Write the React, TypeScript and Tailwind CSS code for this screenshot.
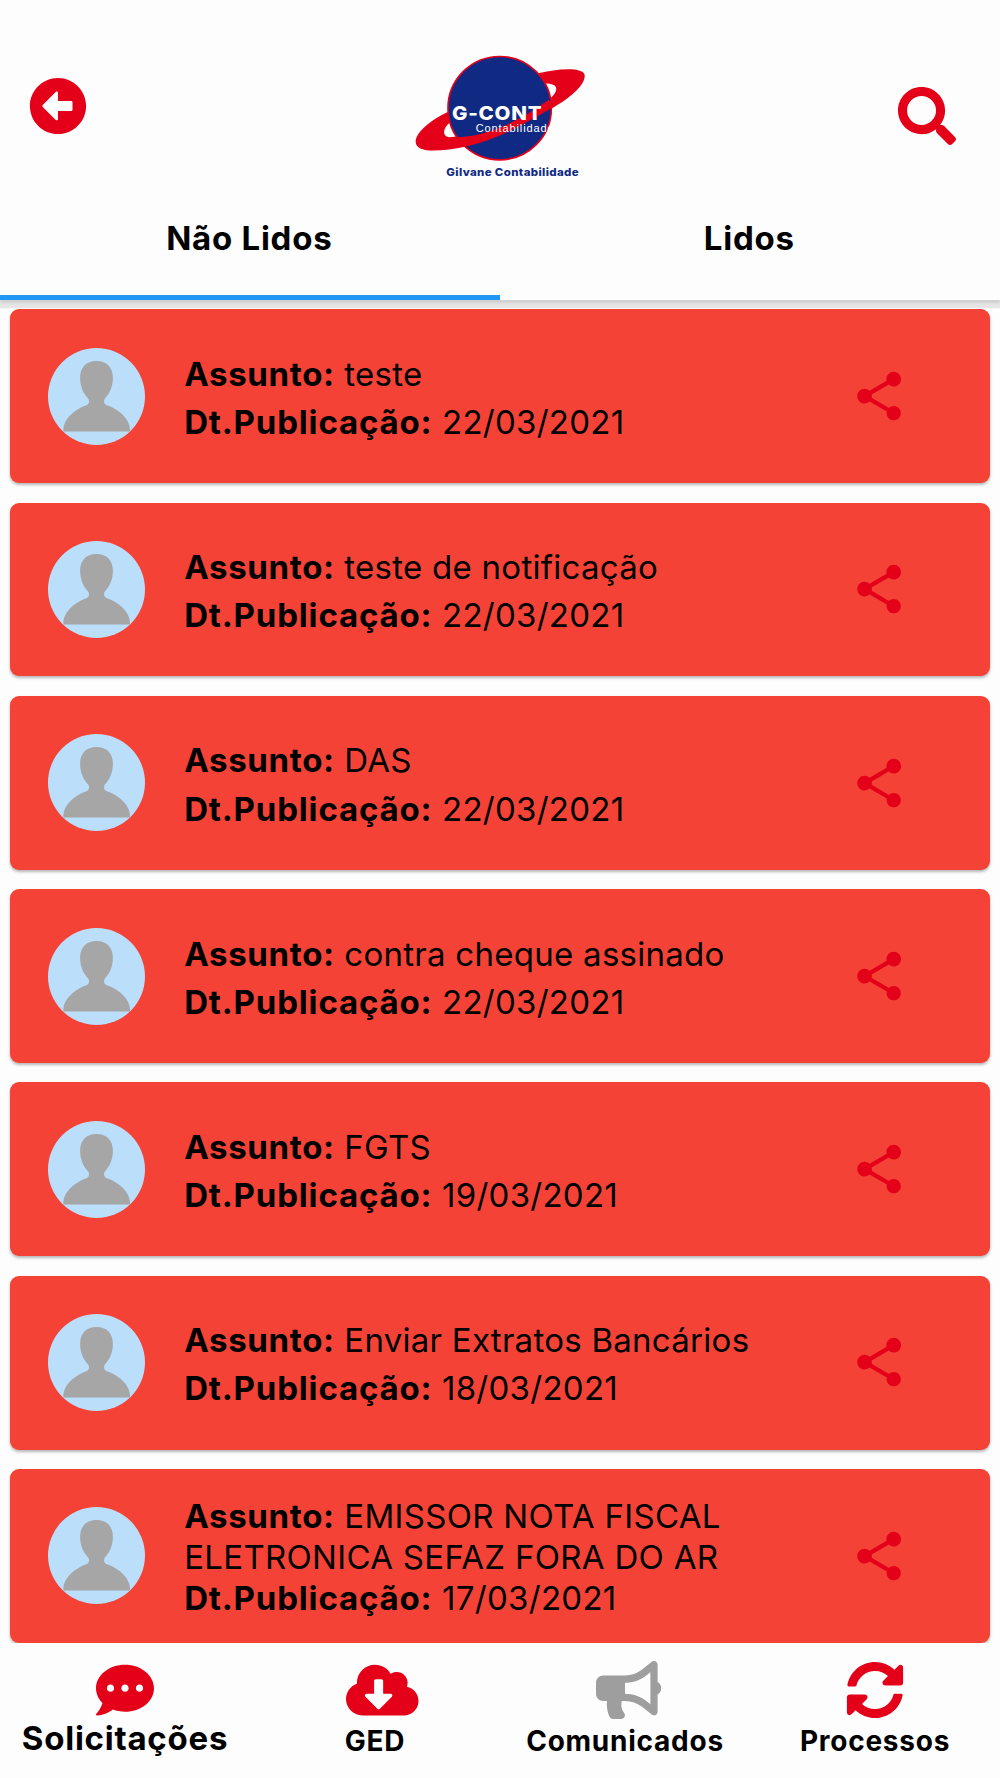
import { FaArrowAltCircleLeft, FaBullhorn, FaCloudDownloadAlt, FaCommentDots, FaSearch, FaSyncAlt } from "react-icons/fa";
import { MdShare } from "react-icons/md";

const notices = [
  { subject: "teste", date: "22/03/2021" },
  { subject: "teste de notificação", date: "22/03/2021" },
  { subject: "DAS", date: "22/03/2021" },
  { subject: "contra cheque assinado", date: "22/03/2021" },
  { subject: "FGTS", date: "19/03/2021" },
  { subject: "Enviar Extratos Bancários", date: "18/03/2021" },
  { subject: "EMISSOR NOTA FISCAL ELETRONICA SEFAZ FORA DO AR", date: "17/03/2021", long: true },
];

function Logo() {
  return (
    <svg viewBox="0 0 600 450" className="h-[150px] w-[200px]" role="img" aria-label="Gilvane Contabilidade">
      <path
        fill="#e50019"
        fillRule="evenodd"
        d="M415 100C470 86 552 80 554 106C556 137 505 177 455 205C370 254 280 304 195 320C130 333 49 343 47 306C46 276 95 238 145 215ZM150 247C128 266 124 291 152 292L300 272L445 180C475 157 483 128 430 131Z"
      />
      <circle cx="299" cy="204.500" r="155" fill="#102a83" stroke="#e50019" strokeWidth="5" />
      <path fill="#e50019" d="M150 291C245 296 350 250 446 179L460 202C370 254 280 304 195 320L165 316Z" />
      <text x="156" y="240" textLength="271" lengthAdjust="spacingAndGlyphs" fill="#fff" fontFamily="Inter, sans-serif" fontWeight="800" fontSize="57" letterSpacing="2">G-CONT</text>
      <text x="227" y="275" textLength="234" fill="#fff" fontFamily="Liberation Sans, sans-serif" fontSize="33">Contabilidade</text>
      <text x="139" y="407" textLength="398" lengthAdjust="spacingAndGlyphs" fill="#102a83" fontFamily="Inter, sans-serif" fontWeight="800" fontSize="32" letterSpacing="1">Gilvane Contabilidade</text>
    </svg>
  );
}

function Avatar() {
  return (
    <svg viewBox="0 0 290 290" className="mt-[38.500px] ml-[38.500px] h-[97px] w-[97px] shrink-0">
      <circle cx="145" cy="145" r="145" fill="#bbdefb" />
      <path
        fill="#a6a6a6"
        d="M145 39C176 39 194 58 194 89C194 119 182 138 170 151C166 156 168 162 169 166C172 170 176 171 181 173C218 188 243 214 245 242V250H46V242C48 214 74 188 110 173C115 171 119 170 121 166C123 162 124 156 120 151C108 138 96 119 96 89C96 58 114 39 145 39Z"
      />
    </svg>
  );
}

function Notice({ subject, date, long }: { subject: string; date: string; long?: boolean }) {
  return (
    <article className="mx-[9.700px] mb-[19.380px] flex h-[173.900px] shrink-0 rounded-[9px] bg-[#f44336] shadow-[0_2px_3px_rgba(0,0,0,0.28)]">
      <Avatar />
      <div
        className={
          long
            ? "mt-[27.500px] ml-[39px] w-[620px] text-[33px] leading-[41px] tracking-[0.300px]"
            : "mt-[40.500px] ml-[39px] w-[620px] text-[33px] leading-[48.300px] tracking-[0.270px]"
        }
      >
        <p>
          <b className="font-bold tracking-[0.650px]">Assunto:</b> {subject}
        </p>
        <p>
          <b className="font-bold tracking-[0.830px]">Dt.Publicação:</b> {date}
        </p>
      </div>
      <MdShare className="mt-[57.800px] ml-[46px] size-[58.300px] shrink-0 text-[#e50019]" />
    </article>
  );
}

export default function App() {
  return (
    <div className="flex h-[1778px] w-[1000px] flex-col overflow-hidden bg-[#fdfdfd] font-['Inter',sans-serif] text-black">
      <header className="relative z-10 h-[300px] shrink-0 bg-[#fdfdfd] shadow-[0_3px_2px_#d0d0d0,0_8px_1px_#e5e5e5]">
        <div className="flex h-[190px] items-start justify-between pr-[44px] pl-[29px]">
          <FaArrowAltCircleLeft className="mt-[77.300px] size-[58px] text-[#e50019]" />
          <div className="mt-10 ml-[15px]">
            <Logo />
          </div>
          <FaSearch className="mt-[87px] size-[58px] text-[#e50019]" />
        </div>
        <nav className="grid h-[110px] grid-cols-2 text-center text-[33px] leading-[40px] font-bold tracking-[0.750px]">
          <div className="border-b-5 border-[#2196f3] pt-[28px] pr-[1.500px]">Não Lidos</div>
          <div className="pt-[28px] pr-[1.500px]">Lidos</div>
        </nav>
      </header>
      <main className="flex h-[1342.700px] shrink-0 flex-col overflow-hidden pt-[9.300px]">
        {notices.map((n, i) => (
          <Notice key={i} {...n} />
        ))}
      </main>
      <footer className="grid grow grid-cols-4 pt-[18.300px] text-[28px] leading-[36px] font-bold tracking-[0.750px]">
        <div className="flex flex-col items-center">
          <FaCommentDots className="size-[58px] text-[#e50019]" />
          <span className="mt-px text-[33px]">Solicitações</span>
        </div>
        <div className="flex flex-col items-center">
          <div className="h-[58px] w-[58px]">
            <FaCloudDownloadAlt className="h-[58px] w-[72.500px] max-w-none text-[#e50019]" />
          </div>
          <span className="mt-1">GED</span>
        </div>
        <div className="flex flex-col items-center">
          <div className="h-[58px] w-[58px]">
            <FaBullhorn className="h-[58px] w-[65.250px] max-w-none text-[#9e9e9e]" />
          </div>
          <span className="mt-1">Comunicados</span>
        </div>
        <div className="flex flex-col items-center">
          <FaSyncAlt className="size-[58px] text-[#e50019]" />
          <span className="mt-1">Processos</span>
        </div>
      </footer>
    </div>
  );
}
